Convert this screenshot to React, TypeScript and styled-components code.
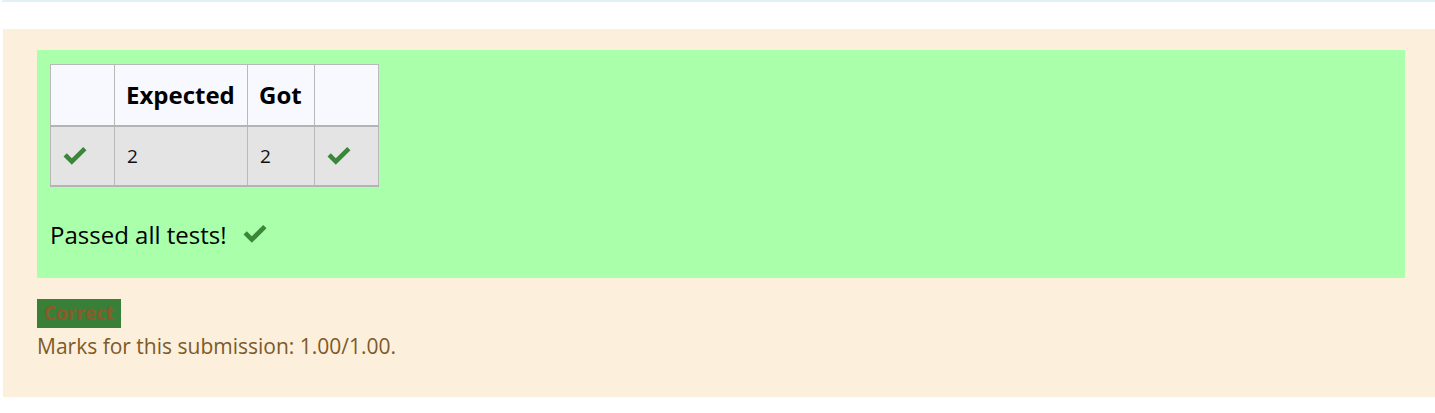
import React from "react";
import styled, { createGlobalStyle } from "styled-components";

const Global = createGlobalStyle`
  html, body { margin: 0; padding: 0; background: #ffffff; }
  body { font-family: "Open Sans", "Noto Sans", sans-serif; }
`;

const TopRule = styled.div`
  height: 2px;
  margin-left: 2px;
  background: #e2f1f8;
`;

const Outcome = styled.div`
  margin: 27px 0 0 3px;
  height: 368px;
  box-sizing: border-box;
  padding: 21px 30px 0 34px;
  background: #fcefdc;
  color: #7d5a29;
`;

const Feedback = styled.div`
  height: 228px;
  box-sizing: border-box;
  padding: 14px 13px;
  background: #aaffaa;
`;

const ResultTable = styled.table`
  border-collapse: collapse;
  table-layout: fixed;
  width: 328px;
  color: #111;
`;

const HeadCell = styled.th<{ $w: number }>`
  width: ${(p) => p.$w}px;
  height: 61px;
  box-sizing: border-box;
  padding: 0 11px;
  text-align: left;
  font-size: 24px;
  font-weight: 700;
  color: #000;
  background: #f8f9ff;
  border: 1px solid #b9b9b9;
  border-bottom: 2px solid #b4b4b4;
  white-space: nowrap;
`;

const BodyCell = styled.td`
  height: 60px;
  box-sizing: border-box;
  padding: 0 12px;
  font-size: 19px;
  background: #e4e4e4;
  border: 1px solid #b9b9b9;
  border-bottom: 2px solid #b4b4b4;
`;

const CheckIcon = ({ size = 24 }: { size?: number }) => (
  <svg width={size} height={(size * 18) / 24} viewBox="0 0 24 18" style={{ display: "block" }}>
    <path d="M0.5 9.5 L3.8 6.3 L8.8 11.2 L20.2 0 L23.5 3.3 L8.8 17.8 Z" fill="#3a873a" />
  </svg>
);

const Passed = styled.p`
  display: flex;
  align-items: center;
  gap: 16px;
  margin: 31px 0 0;
  font-size: 24px;
  color: #000;
`;

const Badge = styled.span`
  display: inline-block;
  margin-top: 21px;
  padding: 0 7px;
  height: 29px;
  line-height: 29px;
  font-size: 19px;
  font-weight: 700;
  background: #3a7f37;
  color: #8b5a2b;
`;

const Marks = styled.div`
  margin-top: 4px;
  font-size: 21px;
`;

export default function App() {
  return (
    <>
      <Global />
      <TopRule />
      <Outcome>
        <Feedback>
          <ResultTable>
            <thead>
              <tr>
                <HeadCell $w={64}></HeadCell>
                <HeadCell $w={133}>Expected</HeadCell>
                <HeadCell $w={67}>Got</HeadCell>
                <HeadCell $w={64}></HeadCell>
              </tr>
            </thead>
            <tbody>
              <tr>
                <BodyCell><CheckIcon /></BodyCell>
                <BodyCell>2</BodyCell>
                <BodyCell>2</BodyCell>
                <BodyCell><CheckIcon /></BodyCell>
              </tr>
            </tbody>
          </ResultTable>
          <Passed>
            Passed all tests! <CheckIcon />
          </Passed>
        </Feedback>
        <Badge>Correct</Badge>
        <Marks>Marks for this submission: 1.00/1.00.</Marks>
      </Outcome>
    </>
  );
}
